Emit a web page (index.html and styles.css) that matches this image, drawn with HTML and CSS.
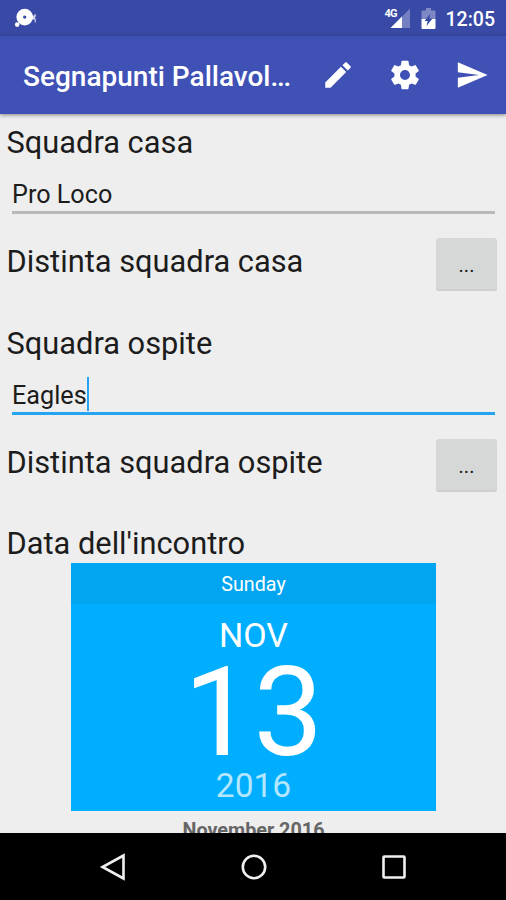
FILE: index.html
```html
<!DOCTYPE html>
<html lang="it">
<head>
    <meta charset="UTF-8">
    <meta name="viewport" content="width=device-width, initial-scale=1.0">
    <title>Segnapunti Pallavolo</title>
    <link rel="stylesheet" href="styles.css">
</head>
<body>
    <div class="screen">
        <div class="status-bar">
            <svg class="debug-icon" width="24" height="20" viewBox="0 0 24 20" fill="#fff">
                <path fill-rule="evenodd" d="M10.7 0.8a8.3 8.3 0 1 1 0 16.6a8.3 8.3 0 1 1 0-16.6zM10.7 7.4a1.7 1.7 0 1 0 0 3.4a1.7 1.7 0 1 0 0-3.4z"/>
                <circle cx="3.2" cy="16.6" r="2.3"/>
                <path d="M18 7.5h3v4H18z" opacity="0.75"/>
                <path d="M20.3 6.3h1.8v2.4h-1.8zM20.6 10.5h1.4v4h-1.4z" opacity="0.6"/>
            </svg>
            <div class="status-icons">
                <div class="signal">
                    <svg width="22" height="20" viewBox="0 0 22 20" fill="#fff">
                        <path d="M21 0.5V20H1.5z" opacity="0.3"/>
                        <path d="M13 8.5V20H1.5z"/>
                    </svg>
                    <span class="network">4G</span>
                </div>
                <svg class="battery" width="15" height="21" viewBox="0 0 15 21">
                    <path d="M5 0h5v2.5h3.5q1 0 1 1V11H0.5V3.5q0-1 1-1H5z" fill="#fff" opacity="0.35"/>
                    <path d="M0.5 11h14v9q0 1-1 1h-12q-1 0-1-1z" fill="#fff"/>
                    <path d="M9.5 5.5L3.5 13h3.2L5.5 18l6-7.5H8.3z" fill="#3949a6"/>
                </svg>
                <span class="clock">12:05</span>
            </div>
        </div>

        <div class="app-bar">
            <h1 class="title">Segnapunti Pallavol<span class="dots">...</span></h1>
            <div class="actions">
                <svg width="34" height="34" viewBox="0 0 24 24" fill="#fff">
                    <path d="M3 17.25V21h3.75L17.81 9.94l-3.75-3.75L3 17.25zM20.71 7.04c.39-.39.39-1.02 0-1.41l-2.34-2.34c-.39-.39-1.02-.39-1.41 0l-1.83 1.83 3.75 3.75 1.83-1.83z"/>
                </svg>
                <svg width="34" height="34" viewBox="0 0 24 24" fill="#fff">
                    <path d="M19.43 12.98c.04-.32.07-.64.07-.98s-.03-.66-.07-.98l2.11-1.65c.19-.15.24-.42.12-.64l-2-3.46c-.12-.22-.39-.3-.61-.22l-2.49 1c-.52-.4-1.08-.73-1.69-.98l-.38-2.65C14.46 2.18 14.25 2 14 2h-4c-.25 0-.46.18-.49.42l-.38 2.65c-.61.25-1.17.59-1.69.98l-2.49-1c-.23-.09-.49 0-.61.22l-2 3.46c-.13.22-.07.49.12.64l2.11 1.65c-.04.32-.07.65-.07.98s.03.66.07.98l-2.11 1.65c-.19.15-.24.42-.12.64l2 3.46c.12.22.39.3.61.22l2.49-1c.52.4 1.08.73 1.69.98l.38 2.65c.03.24.24.42.49.42h4c.25 0 .46-.18.49-.42l.38-2.65c.61-.25 1.17-.59 1.69-.98l2.49 1c.23.09.49 0 .61-.22l2-3.46c.12-.22.07-.49-.12-.64l-2.11-1.65zM12 15.5c-1.93 0-3.5-1.57-3.5-3.5s1.57-3.5 3.5-3.5 3.5 1.57 3.5 3.5-1.57 3.5-3.5 3.5z"/>
                </svg>
                <svg width="34" height="34" viewBox="0 0 24 24" fill="#fff">
                    <path d="M2.01 21L23 12 2.01 3 2 10l15 2-15 2z"/>
                </svg>
            </div>
        </div>

        <div class="content">
            <div class="team">
                <div class="label">Squadra casa</div>
                <div class="field">Pro Loco</div>
                <div class="roster">
                    <span class="label">Distinta squadra casa</span>
                    <button class="more">...</button>
                </div>
            </div>
            <div class="team">
                <div class="label">Squadra ospite</div>
                <div class="field focused">Eagles<span class="caret"></span></div>
                <div class="roster">
                    <span class="label">Distinta squadra ospite</span>
                    <button class="more">...</button>
                </div>
            </div>
            <div class="label match-date">Data dell'incontro</div>
            <div class="date-picker">
                <div class="weekday">Sunday</div>
                <div class="date">
                    <div class="month">NOV</div>
                    <div class="day">13</div>
                    <div class="year">2016</div>
                </div>
            </div>
            <div class="calendar-title">November 2016</div>
        </div>

        <div class="nav-bar">
            <svg width="28" height="28" viewBox="0 0 28 28"><path d="M24.5 2.5v23L3.5 14z"/></svg>
            <svg width="28" height="28" viewBox="0 0 28 28"><circle cx="14" cy="14" r="11.2"/></svg>
            <svg width="28" height="28" viewBox="0 0 28 28"><rect x="3.5" y="3.5" width="21" height="21" rx="0.8"/></svg>
        </div>
    </div>
</body>
</html>
```
FILE: styles.css
```css
* {
    box-sizing: border-box;
}
body {
    margin: 0;
    font-family: Roboto, sans-serif;
    background-color: #eeeeee;
    color: #1c1c1c;
}
.screen {
    display: flex;
    flex-direction: column;
    width: 506px;
    height: 900px;
    overflow: hidden;
}
.status-bar {
    display: flex;
    justify-content: space-between;
    height: 36px;
    flex: none;
    padding: 8px 11px 0 14px;
    background-color: #3949a6;
    color: white;
}
.status-icons {
    display: flex;
    align-items: flex-start;
}
.signal {
    position: relative;
    height: 20px;
}
.network {
    position: absolute;
    left: -4px;
    top: 0;
    font-size: 11px;
    font-weight: 700;
    line-height: 11px;
    letter-spacing: -0.8px;
}
.battery {
    margin-left: 10px;
}
.clock {
    margin-left: 10px;
    font-size: 19.5px;
    font-weight: 500;
    line-height: 23px;
}
.app-bar {
    position: relative;
    display: flex;
    align-items: center;
    justify-content: space-between;
    height: 78px;
    flex: none;
    padding: 0 17px 0 23px;
    background-color: #3f51b5;
    color: white;
    box-shadow: 0 1px 4px rgba(0, 0, 0, 0.45);
}
.title {
    margin: 2px 0 0;
    font-size: 28px;
    font-weight: 500;
    white-space: nowrap;
}
.dots {
    letter-spacing: -1.3px;
}
.actions {
    display: flex;
    gap: 33px;
}
.content {
    flex: 1;
    min-height: 0;
    padding: 10px 9px 0 6.5px;
    overflow: hidden;
}
.team {
    height: 201px;
}
.label {
    height: 36px;
    font-size: 30.8px;
    line-height: 38px;
    white-space: nowrap;
}
.match-date {
    line-height: 36px;
}
.field {
    display: flex;
    height: 54px;
    margin: 0 2px 0 5.5px;
    padding-top: 16px;
    border-bottom: 3px solid #b9b9b9;
    font-size: 25.2px;
    line-height: 37px;
}
.focused {
    border-color: #25a5f1;
}
.caret {
    width: 2px;
    height: 34px;
    background-color: #25a5f1;
}
.roster {
    display: flex;
    justify-content: space-between;
    margin-top: 24px;
}
.roster .label {
    line-height: 47px;
}
.more {
    width: 61px;
    height: 53px;
    padding: 0;
    border: none;
    border-radius: 3px;
    background-color: #d6d8d7;
    box-shadow: inset 0 -2px #cecfce;
    color: #1c1c1c;
    font-family: inherit;
    font-size: 20px;
}
.date-picker {
    width: 365px;
    height: 248px;
    margin: 1px 0 0 64.5px;
    background-color: #00aeff;
    color: white;
    text-align: center;
}
.weekday {
    height: 41px;
    background-color: #02a5f0;
    font-size: 19.7px;
    line-height: 43px;
}
.date {
    padding-top: 11px;
}
.month {
    font-size: 34px;
    line-height: 40px;
}
.day {
    font-size: 124px;
    line-height: 115px;
}
.year {
    color: #b3e7ff;
    font-size: 33.5px;
    line-height: 31px;
}
.calendar-title {
    width: 365px;
    margin: 7px 0 0 64.5px;
    color: #666666;
    font-size: 19.8px;
    font-weight: 700;
    line-height: 25px;
    text-align: center;
}
.nav-bar {
    display: flex;
    align-items: center;
    justify-content: space-between;
    height: 67px;
    flex: none;
    padding: 0 98px 0 99px;
    background-color: black;
}
.nav-bar svg {
    fill: none;
    stroke: #f0f0f0;
    stroke-width: 2.6;
}
```
